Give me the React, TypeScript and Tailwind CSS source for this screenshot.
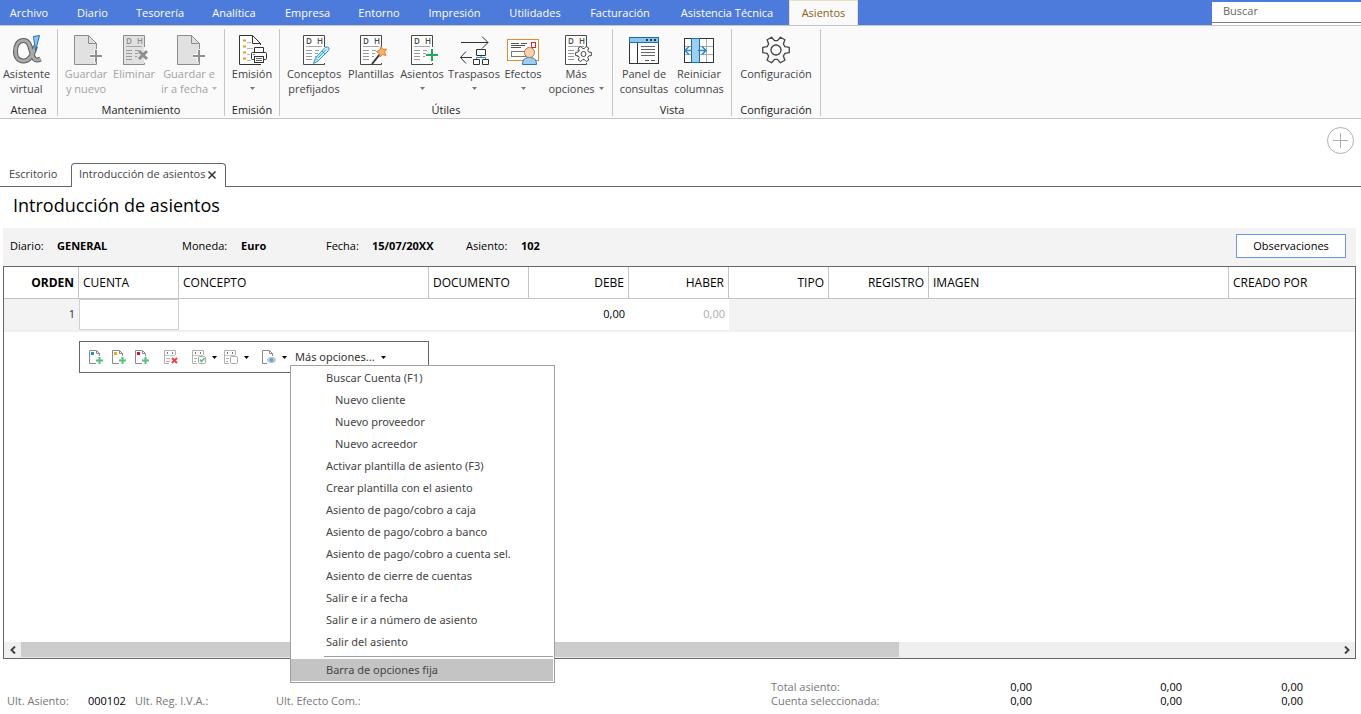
import type { ReactNode } from "react";
import { clsx } from "clsx";

/* ---------- Icons ---------- */

// six rounded teeth around a hub
function gearPath(cx: number, cy: number, outer: number, inner: number) {
  const points: string[] = [];
  for (let i = 0; i < 6; i++) {
    const base = i * 60;
    for (const [deg, r] of [
      [-21, inner],
      [-11, outer],
      [11, outer],
      [21, inner],
    ]) {
      const a = ((base + deg) * Math.PI) / 180;
      points.push(`${(cx + r * Math.cos(a)).toFixed(2)} ${(cy + r * Math.sin(a)).toFixed(2)}`);
    }
  }
  return `M${points.join("L")}Z`;
}

function Icon({ children }: { children: ReactNode }) {
  return (
    <svg width="32" height="32" viewBox="0 0 32 32" fill="none" className="shrink-0" aria-hidden="true">
      {children}
    </svg>
  );
}

function AssistantIcon() {
  const d = "M24.500 12C22 21 18 27 12.500 27C7.500 27 4.500 23.500 4.500 17.500C4.500 11 7.500 6.500 12.500 6.500C18 6.500 19 12 20.500 18C22 24.500 24 28 29.500 25";
  return (
    <Icon>
      <path d={d} stroke="#5c5c5c" strokeWidth="5" />
      <path d={d} stroke="#a9a9a9" strokeWidth="3" />
      <path d="M22.500 2.500L28.500 1.500L24.500 16.500Z" fill="#8cc8f0" stroke="#1f6fae" />
    </Icon>
  );
}

function PagePlusIcon() {
  return (
    <Icon>
      <path d="M4.500 1.500H18L26.500 10V30.500H4.500Z" fill="#e1e1e1" />
      <path d="M26.500 15V9.500L18.500 1.500H4.500V30.500H26.500V28M18.500 1.500V9.500H26.500" stroke="#8c8c8c" />
      <path d="M20 22H32M26 16V28" stroke="#fafafa" strokeWidth="4" />
      <path d="M20 22H32M26 16V28" stroke="#909090" strokeWidth="2" />
    </Icon>
  );
}

function LedgerIcon({ children, muted = false }: { children?: ReactNode; muted?: boolean }) {
  const ink = muted ? "#8c8c8c" : "#4a4a4a";
  return (
    <Icon>
      <rect x="5" y="1" width="21" height="30" fill={muted ? "#e1e1e1" : "#ffffff"} />
      <path d="M26.500 13V1.500H5.500V30.500H26.500V29" stroke={ink} />
      <text x="8" y="10" fontSize="8" fontWeight="600" fill={ink}>D</text>
      <text x="19" y="10" fontSize="8" fontWeight="600" fill={ink}>H</text>
      <path d="M8 12.500H24" stroke="#a8a8a8" />
      <path d="M8 16.500H14M8 19.500H14M8 22.500H14M8 25.500H14M17 16.500H21M17 19.500H20M17 22.500H19" stroke="#9a9a9a" />
      {children}
    </Icon>
  );
}

function PrintIcon() {
  return (
    <Icon>
      <path d="M3.500 1.500H17L24.500 9V30.500H3.500Z" fill="#fff" />
      <path d="M24.500 11V9.500L16.500 1.500H3.500V30.500H25M16.500 1.500V9.500H24.500" stroke="#333" />
      <path d="M7 6.500H10M7 12.500H10M7 18.500H10M7 24.500H10" stroke="#ee9a1f" strokeWidth="2" />
      <path d="M11 8.500H15M11 14.500H17M11 20.500H14M11 26.500H15" stroke="#b5b5b5" />
      <path d="M18.500 18.500V13.500H27.500V18.500" fill="#fff" stroke="#333" />
      <rect x="15.500" y="18.500" width="15" height="7" rx="1" fill="#fff" stroke="#333" />
      <rect x="18.500" y="22.500" width="9" height="6" fill="#fff" stroke="#333" />
      <path d="M20 24.500H26M20 26.500H26" stroke="#666" />
      <path d="M17 20.500H19" stroke="#2a8ad4" />
    </Icon>
  );
}

function TransferIcon() {
  return (
    <Icon>
      <path d="M3 8.500H30M24 2.500L30 8.500L24 14.500M14 23.500H2.500M8 17.500L2.500 23.500L8 29.500" stroke="#333" />
      <path d="M18.500 25V23.500H27.500V25M23 21V23.500" stroke="#2a8ad4" />
      <path d="M18.500 15.500H27.500V21.500H18.500ZM15.500 25.500H21.500V30.500H15.500ZM24.500 25.500H30.500V30.500H24.500Z" fill="#fff" stroke="#333" />
    </Icon>
  );
}

function EffectsIcon() {
  return (
    <Icon>
      <rect x="0.500" y="5.500" width="31" height="21" fill="#fdfdfd" stroke="#e8892c" />
      <path d="M4 9.500H12M14 9.500H20M4 11.500H18M4 13.500H14" stroke="#555" />
      <rect x="24.500" y="8.500" width="4" height="5" stroke="#e02828" />
      <rect x="4.500" y="17.500" width="14" height="5" stroke="#777" />
      <path d="M15.500 30.500C15.500 25 18.500 23.500 22.500 23.500S29.500 25 29.500 30.500Z" fill="#9ecff3" stroke="#2a76b5" />
      <circle cx="22.500" cy="18.500" r="5" fill="#f9d2ad" stroke="#b9794c" />
    </Icon>
  );
}

function PanelIcon() {
  return (
    <Icon>
      <rect x="1.500" y="3.500" width="29" height="26" fill="#fff" stroke="#333" />
      <rect x="1.500" y="3.500" width="29" height="5" fill="#8ac6f0" stroke="#1a6db3" />
      <path d="M18 6H20M22 6H24M26 6H28" stroke="#333" strokeWidth="2" />
      <path d="M9.500 9V29" stroke="#333" />
      <path d="M13 12.500H27M13 15.500H27M13 18.500H27M13 21.500H27" stroke="#666" />
      <path d="M17 26.500H21M23 26.500H27" stroke="#555" />
    </Icon>
  );
}

function ColumnsIcon() {
  return (
    <Icon>
      <rect x="1.500" y="4.500" width="29" height="24" fill="#fff" />
      <path d="M2 12.500H30M2 20.500H30M23.500 5V28" stroke="#ababab" />
      <rect x="1.500" y="4.500" width="29" height="24" stroke="#333" />
      <rect x="8.500" y="4.500" width="8" height="24" fill="#9ccff4" stroke="#1a6db3" />
      <path d="M9 16.500H2.500M6 12.500L2 16.500L6 20.500M15 16.500H22.500M19 12.500L23 16.500L19 20.500" stroke="#2286cf" strokeWidth="1.500" />
    </Icon>
  );
}

function SettingsIcon() {
  return (
    <Icon>
      <path d={gearPath(16, 16, 13.5, 9.5)} fill="#fafafa" stroke="#444" strokeWidth="1.300" strokeLinejoin="round" />
      <circle cx="16" cy="16" r="5" stroke="#444" strokeWidth="1.300" />
    </Icon>
  );
}

function SmallIcon({ children }: { children: ReactNode }) {
  return (
    <svg width="16" height="16" viewBox="0 0 16 16" fill="none" className="shrink-0" aria-hidden="true">
      {children}
    </svg>
  );
}

function NewPage({ tag }: { tag: string }) {
  return (
    <SmallIcon>
      <path d="M11.500 7V4.500L8.500 1.500H1.500V14.500H8M8.500 1.500V4.500H11.500" stroke="#8b8b8b" />
      <rect x="3" y="3" width="3" height="3" fill={tag} />
      <path d="M8 11.500H15M11.500 8V15" stroke="#55c083" strokeWidth="2" />
    </SmallIcon>
  );
}

function SmallLedger({ children }: { children: ReactNode }) {
  return (
    <SmallIcon>
      <path d="M12.500 6V1.500H1.500V14.500H6" stroke="#b0b0b0" />
      <path d="M4 4H5M9 4H10" stroke="#777" strokeWidth="2" />
      <path d="M2 6.500H12" stroke="#c8c8c8" />
      {children}
    </SmallIcon>
  );
}

function Caret({ className }: { className?: string }) {
  return (
    <svg width="5" height="3" viewBox="0 0 5 3" className={clsx("shrink-0", className)} aria-hidden="true">
      <path d="M0 0H5L2.500 3Z" fill="currentColor" />
    </svg>
  );
}

/* ---------- Data ---------- */

const MENU = [
  { label: "Archivo", width: "w-[58px] mr-1" },
  { label: "Diario", width: "w-[61px]" },
  { label: "Tesorería", width: "w-[74px]" },
  { label: "Analítica", width: "w-[74px]" },
  { label: "Empresa", width: "w-[73px]" },
  { label: "Entorno", width: "w-[70px]" },
  { label: "Impresión", width: "w-[81px]" },
  { label: "Utilidades", width: "w-[80px]" },
  { label: "Facturación", width: "w-[90px]" },
  { label: "Asistencia Técnica", width: "w-[124px]" },
];

const COLUMNS = [
  { label: "ORDEN", width: "w-[75px]", right: true, bold: true },
  { label: "CUENTA", width: "w-[100px]" },
  { label: "CONCEPTO", width: "w-[250px]" },
  { label: "DOCUMENTO", width: "w-[100px]" },
  { label: "DEBE", width: "w-[100px]", right: true },
  { label: "HABER", width: "w-[100px]", right: true },
  { label: "TIPO", width: "w-[100px]", right: true },
  { label: "REGISTRO", width: "w-[100px]", right: true },
  { label: "IMAGEN", width: "w-[300px]" },
  { label: "CREADO POR", width: "" },
];

const OPTIONS = [
  { label: "Buscar Cuenta (F1)" },
  { label: "Nuevo cliente", nested: true },
  { label: "Nuevo proveedor", nested: true },
  { label: "Nuevo acreedor", nested: true },
  { label: "Activar plantilla de asiento (F3)" },
  { label: "Crear plantilla con el asiento" },
  { label: "Asiento de pago/cobro a caja" },
  { label: "Asiento de pago/cobro a banco" },
  { label: "Asiento de pago/cobro a cuenta sel." },
  { label: "Asiento de cierre de cuentas" },
  { label: "Salir e ir a fecha" },
  { label: "Salir e ir a número de asiento" },
  { label: "Salir del asiento" },
];

/* ---------- Ribbon ---------- */

function RibbonGroup({ title, width, children }: { title: string; width: string; children: ReactNode }) {
  return (
    <section className={clsx("flex flex-col border-r border-[#c6c6c6]", width)} aria-label={title}>
      <div className="flex flex-1 pt-[5px] pb-2">{children}</div>
      <div className="h-3 text-center leading-3 text-[#222]">{title}</div>
    </section>
  );
}

function RibbonButton({
  icon,
  lines,
  width,
  caret = false,
  disabled = false,
}: {
  icon: ReactNode;
  lines: string[];
  width: string;
  caret?: boolean;
  disabled?: boolean;
}) {
  return (
    <button
      type="button"
      disabled={disabled}
      className={clsx(
        "flex flex-col items-center whitespace-nowrap leading-[15px]",
        width,
        disabled ? "text-[#a3a3a3]" : "text-[#444]",
      )}
    >
      {icon}
      <span>{lines[0]}</span>
      <span className="flex h-[15px] items-center gap-1">
        {lines[1]}
        {caret && <Caret className={disabled ? "text-[#b5b5b5]" : "text-[#777]"} />}
      </span>
    </button>
  );
}

function Ribbon() {
  return (
    <div className="flex border-y border-[#c6c6c6] bg-[#fafafa] pt-[3px] pb-[2px]">
      <RibbonGroup title="Atenea" width="w-[58px]">
        <RibbonButton icon={<AssistantIcon />} lines={["Asistente", "virtual"]} width="w-[53px]" />
      </RibbonGroup>
      <RibbonGroup title="Mantenimiento" width="w-[167px]">
        <RibbonButton icon={<PagePlusIcon />} lines={["Guardar", "y nuevo"]} width="w-[56px]" disabled />
        <RibbonButton
          icon={
            <LedgerIcon muted>
              <path d="M21 17L29 25M29 17L21 25" stroke="#8f8f8f" strokeWidth="3" />
            </LedgerIcon>
          }
          lines={["Eliminar"]}
          width="w-[40px]"
          disabled
        />
        <RibbonButton icon={<PagePlusIcon />} lines={["Guardar e", "ir a fecha"]} width="w-[70px]" caret disabled />
      </RibbonGroup>
      <RibbonGroup title="Emisión" width="w-[55px]">
        <RibbonButton icon={<PrintIcon />} lines={["Emisión"]} width="w-[54px]" caret />
      </RibbonGroup>
      <RibbonGroup title="Útiles" width="w-[333px]">
        <RibbonButton
          icon={
            <LedgerIcon>
              <path d="M15.500 29.500L17.500 24L27 13.500Q29.500 12 31 14Q31.500 15.500 30 17L20 27Z" fill="#d3edfa" stroke="#1f9bd6" />
              <path d="M18 24.500L20 26.500M24 17L27 20M20 24L28 15.500" stroke="#1f9bd6" />
            </LedgerIcon>
          }
          lines={["Conceptos", "prefijados"]}
          width="w-[68px]"
        />
        <RibbonButton
          icon={
            <LedgerIcon>
              <path d="M17 30L25 20" stroke="#333" strokeWidth="2" />
              <path d="M26 12.500L28 15.500L31.500 15L29.500 18L31 21.500L27.500 20.500L25 23L24.500 19.500L21.500 17.500L25 16Z" fill="#f8b563" stroke="#e8782c" />
            </LedgerIcon>
          }
          lines={["Plantillas"]}
          width="w-[46px]"
        />
        <RibbonButton
          icon={
            <LedgerIcon>
              <path d="M20 21H32M26 15V27" stroke="#fff" strokeWidth="4" />
              <path d="M20 21H32M26 15V27" stroke="#1cae54" strokeWidth="2" />
            </LedgerIcon>
          }
          lines={["Asientos"]}
          width="w-[56px]"
          caret
        />
        <RibbonButton icon={<TransferIcon />} lines={["Traspasos"]} width="w-[48px]" caret />
        <RibbonButton icon={<EffectsIcon />} lines={["Efectos"]} width="w-[50px]" caret />
        <RibbonButton
          icon={
            <LedgerIcon>
              <path d={gearPath(23.5, 20, 8, 5.5)} fill="#fff" stroke="#444" strokeLinejoin="round" />
              <circle cx="23.500" cy="20" r="2.500" stroke="#444" />
            </LedgerIcon>
          }
          lines={["Más", "opciones"]}
          width="w-[56px]"
          caret
        />
      </RibbonGroup>
      <RibbonGroup title="Vista" width="w-[119px]">
        <RibbonButton icon={<PanelIcon />} lines={["Panel de", "consultas"]} width="w-[62px]" />
        <RibbonButton icon={<ColumnsIcon />} lines={["Reiniciar", "columnas"]} width="w-[48px]" />
      </RibbonGroup>
      <RibbonGroup title="Configuración" width="w-[89px]">
        <RibbonButton icon={<SettingsIcon />} lines={["Configuración"]} width="w-[88px]" />
      </RibbonGroup>
    </div>
  );
}

/* ---------- Entry toolbar ---------- */

function OptionsMenu() {
  return (
    <ul
      role="menu"
      className="absolute top-4 -left-[5px] z-10 w-[265px] border border-[#a0a0a0] bg-white py-px pr-px text-[#444]"
    >
      {OPTIONS.map((option) => (
        <li key={option.label} role="none">
          <button
            type="button"
            role="menuitem"
            className={clsx("block h-[22px] w-full text-left", option.nested ? "pl-[44px]" : "pl-[35px]")}
          >
            {option.label}
          </button>
        </li>
      ))}
      <li role="separator" className="mt-[3px] mb-[2px] ml-[33px] h-px bg-[#a0a0a0]" />
      <li role="none">
        <button type="button" role="menuitem" className="block h-[22px] w-full bg-[#c4c4c4] pl-[35px] text-left">
          Barra de opciones fija
        </button>
      </li>
    </ul>
  );
}

function EntryToolbar() {
  return (
    <div className="mt-[9px] ml-[75px] flex h-8 w-[350px] items-center border border-[#666] bg-white pl-2">
      <div className="flex gap-[7px]">
        <button type="button" aria-label="Nuevo apunte"><NewPage tag="#1c95d8" /></button>
        <button type="button" aria-label="Insertar apunte"><NewPage tag="#f5a623" /></button>
        <button type="button" aria-label="Duplicar apunte"><NewPage tag="#d8102c" /></button>
      </div>
      <button type="button" aria-label="Eliminar apunte" className="ml-[13px]">
        <SmallLedger>
          <path d="M3 9.500H7M3 12.500H7" stroke="#e8a0a0" />
          <path d="M9 9L14 14M14 9L9 14" stroke="#e84545" strokeWidth="2" />
        </SmallLedger>
      </button>
      <button type="button" aria-label="Marcar apuntes" className="ml-3 flex items-center gap-[5px]">
        <SmallLedger>
          <path d="M3 9.500H6M3 12.500H5" stroke="#b5b5b5" />
          <rect x="7.500" y="7.500" width="7" height="7" rx="1" fill="#fff" stroke="#aaa" />
          <path d="M9 10.500L10.500 12.500L13.500 9" stroke="#55c083" strokeWidth="1.500" />
        </SmallLedger>
        <Caret className="text-black" />
      </button>
      <button type="button" aria-label="Desmarcar apuntes" className="ml-[6px] flex items-center gap-[5px]">
        <SmallLedger>
          <path d="M3 9.500H6M3 12.500H5" stroke="#b5b5b5" />
          <rect x="7.500" y="7.500" width="7" height="7" rx="1" fill="#fff" stroke="#aaa" />
        </SmallLedger>
        <Caret className="text-black" />
      </button>
      <button type="button" aria-label="Ver imagen" className="ml-3 flex items-center gap-[5px]">
        <SmallIcon>
          <path d="M11.500 7V4.500L8.500 1.500H1.500V14.500H6M8.500 1.500V4.500H11.500" stroke="#8b8b8b" />
          <ellipse cx="10.500" cy="11" rx="4" ry="2.500" fill="#b8d5ea" stroke="#a4c4dc" />
          <circle cx="10.500" cy="11" r="2" fill="#6c9fc4" />
        </SmallIcon>
        <Caret className="text-black" />
      </button>
      <div className="relative ml-2 font-['Noto_Sans','Open_Sans',sans-serif]">
        <button type="button" aria-haspopup="menu" aria-expanded="true" className="flex items-center gap-[6px] text-[#333]">
          Más opciones...
          <Caret className="text-black" />
        </button>
        <OptionsMenu />
      </div>
    </div>
  );
}

/* ---------- Page ---------- */

export default function App() {
  return (
    <div className="flex min-h-screen flex-col bg-white font-['Open_Sans','Noto_Sans',sans-serif] text-[11px] text-black">
      <header className="flex h-[25px] bg-[#4d7bdb] text-white">
        {MENU.map((item) => (
          <button key={item.label} type="button" className={clsx("whitespace-nowrap pt-[2px]", item.width)}>
            {item.label}
          </button>
        ))}
        <button type="button" className="-mb-px w-[69px] border-x border-t border-[#e9dfc0] bg-[#fafafa] text-[#8a6410]">
          Asientos
        </button>
        <div className="mt-[2px] ml-auto w-[149px] bg-white pb-[2px]">
          <input
            type="text"
            aria-label="Buscar"
            placeholder="Buscar"
            className="block h-[21px] w-full border-b border-[#808080] px-[11px] pb-1 outline-none placeholder:text-[#666]"
          />
        </div>
      </header>
      <Ribbon />

      <div className="flex h-[44px] items-center justify-end pr-[7px] pb-px">
        <button type="button" aria-label="Añadir">
          <svg width="27" height="27" viewBox="0 0 27 27" fill="none" stroke="#b0b0b0">
            <circle cx="13.500" cy="13.500" r="13" />
            <path d="M6 13.500H21M13.500 6V21" />
          </svg>
        </button>
      </div>

      <nav className="flex h-6 items-end text-[#444]">
        <button type="button" className="h-6 w-[71px] border-b border-[#666] pl-[9px] text-left">
          Escritorio
        </button>
        <button
          type="button"
          className="flex h-6 w-[155px] items-center gap-[3px] whitespace-nowrap rounded-t border border-b-0 border-[#666] pb-[2px] pl-[7px]"
        >
          Introducción de asientos
          <svg width="8" height="8" viewBox="0 0 8 8" stroke="#333" strokeWidth="1.500" aria-hidden="true">
            <path d="M0.500 0.500L7.500 7.500M7.500 0.500L0.500 7.500" />
          </svg>
        </button>
        <div className="h-6 flex-1 border-b border-[#666]" />
      </nav>

      <main className="flex flex-1 flex-col pr-[5px] pl-[3px]">
        <h1 className="h-[41px] pl-[10px] text-[18px] leading-[36px]">Introducción de asientos</h1>

        <div className="flex h-[38px] items-center bg-[#f3f3f3] pr-[10px] pb-[2px] pl-[7px]">
          <span className="w-[47px]">Diario:</span>
          <b className="w-[125px]">GENERAL</b>
          <span className="w-[59px]">Moneda:</span>
          <b className="w-[85px]">Euro</b>
          <span className="w-[46px]">Fecha:</span>
          <b className="w-[94px]">15/07/20XX</b>
          <span className="w-[55px]">Asiento:</span>
          <b>102</b>
          <button type="button" className="ml-auto h-6 w-[110px] border border-[#6f95e6] bg-white">
            Observaciones
          </button>
        </div>

        <div className="flex flex-1 flex-col border border-[#666]">
          <table className="w-full table-fixed border-separate border-spacing-0">
            <thead className="text-xs">
              <tr className="h-8">
                {COLUMNS.map((col) => (
                  <th
                    key={col.label}
                    scope="col"
                    className={clsx(
                      "border-r border-b border-[#c4c4c4] px-1 last:border-r-0",
                      col.width,
                      col.right ? "text-right" : "text-left",
                      col.bold ? "font-bold" : "font-normal",
                    )}
                  >
                    {col.label}
                  </th>
                ))}
              </tr>
            </thead>
            <tbody>
              <tr className="h-[33px] *:border-b-2 *:border-[#f0f0f0]">
                <td className="bg-[#f3f3f3] px-1 text-right text-[#402050]">1</td>
                <td className="p-0">
                  <input type="text" aria-label="Cuenta" className="block h-[31px] w-full border border-[#d0d0d0] px-1 outline-none" />
                </td>
                <td />
                <td />
                <td className="px-1 text-right">0,00</td>
                <td className="px-1 text-right text-[#aaa]">0,00</td>
                <td className="bg-[#f3f3f3]" colSpan={4} />
              </tr>
            </tbody>
          </table>

          <EntryToolbar />

          <div className="mt-auto flex h-4 bg-[#efefef] text-[#444]">
            <button type="button" aria-label="Desplazar a la izquierda" className="flex w-[17px] items-center justify-center">
              <svg width="6" height="8" viewBox="0 0 6 8" fill="none" stroke="currentColor" strokeWidth="2">
                <path d="M5 0.500L1.500 4L5 7.500" />
              </svg>
            </button>
            <div className="flex-1">
              <div className="h-[15px] w-2/3 bg-[#cdcdcd]" />
            </div>
            <button type="button" aria-label="Desplazar a la derecha" className="flex w-[17px] items-center justify-center">
              <svg width="6" height="8" viewBox="0 0 6 8" fill="none" stroke="currentColor" strokeWidth="2">
                <path d="M1 0.500L4.500 4L1 7.500" />
              </svg>
            </button>
          </div>
        </div>
      </main>

      <footer className="flex h-[55px] items-end justify-between pb-[6px] leading-[14px] text-[#777]">
        <div className="flex pl-[7px]">
          <span className="w-[81px]">Ult. Asiento:</span>
          <span className="w-[47px] text-black">000102</span>
          <span className="w-[141px]">Ult. Reg. I.V.A.:</span>
          <span>Ult. Efecto Com.:</span>
        </div>
        <div className="grid w-[590px] grid-cols-[161px_100px_150px_121px] text-right">
          <span className="text-left">Total asiento:</span>
          <span className="text-black">0,00</span>
          <span className="text-black">0,00</span>
          <span className="text-black">0,00</span>
          <span className="text-left">Cuenta seleccionada:</span>
          <span className="text-black">0,00</span>
          <span className="text-black">0,00</span>
          <span className="text-black">0,00</span>
        </div>
      </footer>
    </div>
  );
}
